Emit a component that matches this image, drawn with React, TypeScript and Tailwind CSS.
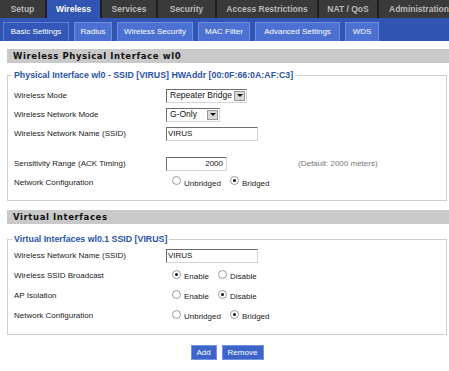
import React from "react";

function Radio({ checked }: { checked?: boolean }) {
  return (
    <span className="inline-flex w-[9px] h-[9px] rounded-full border border-[#9a9a9a] bg-white items-center justify-center relative top-[-2px] shrink-0">
      {checked && <span className="w-[3px] h-[3px] rounded-full bg-[#111]" />}
    </span>
  );
}

function RadioGroup({ items }: { items: { label: string; checked?: boolean }[] }) {
  return (
    <div className="flex items-center pl-[6px] gap-[9px]">
      {items.map((it) => (
        <span key={it.label} className="flex items-center gap-[3px]">
          <Radio checked={it.checked} />
          <span className="relative top-[1px]">{it.label}</span>
        </span>
      ))}
    </div>
  );
}

function Select({ value, width }: { value: string; width: string }) {
  return (
    <div
      className={`${width} h-[14px] flex items-center justify-between border border-t-[#6d6d6d] border-l-[#6d6d6d] border-r-[#d4d4d4] border-b-[#d4d4d4] bg-white`}
    >
      <span className="pl-[3px] text-[8.5px] leading-none text-[#111] whitespace-nowrap">{value}</span>
      <span className="w-[11px] h-[10px] mr-[1px] bg-[#d8d8d8] border border-[#999] flex items-center justify-center shrink-0">
        <span className="w-0 h-0 border-l-[3px] border-r-[3px] border-t-[3px] border-l-transparent border-r-transparent border-t-[#111]" />
      </span>
    </div>
  );
}

function Input({ value, width, right }: { value: string; width: string; right?: boolean }) {
  return (
    <div
      className={`${width} h-[14px] flex items-center border border-t-[#6d6d6d] border-l-[#6d6d6d] border-r-[#d4d4d4] border-b-[#d4d4d4] bg-white ${right ? "justify-end pr-[3px]" : "pl-[1px]"}`}
    >
      <span className="text-[8px] leading-none text-[#111]">{value}</span>
    </div>
  );
}

function Row({ label, children, h = "h-[19px]" }: { label: string; children?: React.ReactNode; h?: string }) {
  return (
    <div className={`flex items-center ${h}`}>
      <div className="w-[158px] pl-[6px] shrink-0">{label}</div>
      <div className="flex items-center">{children}</div>
    </div>
  );
}

function Header({ title }: { title: string }) {
  return (
    <div className="h-[14px] bg-[#c9c9c9] flex items-center pl-[6px] font-['DejaVu_Sans',sans-serif] font-bold text-[8.5px] tracking-[0.6px] text-[#111]">
      {title}
    </div>
  );
}

const topTabs = [
  { label: "Setup", w: "w-[45px]" },
  { label: "Wireless", w: "w-[53px]", active: true },
  { label: "Services", w: "w-[54px]" },
  { label: "Security", w: "w-[57px]" },
  { label: "Access Restrictions", w: "w-[100px]" },
  { label: "NAT / QoS", w: "w-[58px]" },
  { label: "Administration", w: "w-[80px]" },
];

const subTabs = [
  { label: "Basic Settings", w: "w-[66px]", active: true },
  { label: "Radius", w: "w-[38px]" },
  { label: "Wireless Security", w: "w-[76px]" },
  { label: "MAC Filter", w: "w-[52px]" },
  { label: "Advanced Settings", w: "w-[85px]" },
  { label: "WDS", w: "w-[34px]" },
];

export default function App() {
  return (
    <div className="w-[449px] h-[371px] overflow-hidden bg-white font-['Liberation_Sans',Arial,sans-serif] text-[8px] text-[#222]">
      {/* top tabs */}
      <div className="h-[18px] bg-[#1f1f1f] flex gap-[2px] overflow-hidden">
        {topTabs.map((t) => (
          <div
            key={t.label}
            className={`${t.w} shrink-0 h-full flex items-center justify-center font-bold text-[8.5px] whitespace-nowrap ${
              t.active ? "bg-[#3055b2] text-white" : "bg-[#3a3a3a] text-[#b9b9b9]"
            }`}
          >
            {t.label}
          </div>
        ))}
      </div>
      {/* sub tabs */}
      <div className="h-[23px] bg-[#3055b2] flex items-end pl-[3px] gap-[5px]">
        {subTabs.map((t) => (
          <div
            key={t.label}
            className={`${t.w} h-[19px] shrink-0 flex items-center justify-center text-white text-[8px] whitespace-nowrap border border-b-0 ${
              t.active ? "bg-[#3458b8] border-[#5e80d8]" : "bg-[#4c71d2] border-[#6c8fe2]"
            }`}
          >
            {t.label}
          </div>
        ))}
      </div>

      <div className="pl-[7px]">
        <div className="mt-[8px]">
          <Header title="Wireless Physical Interface wl0" />
        </div>
        <fieldset className="mt-[7px] mr-[2px] border border-[#cfcfcf] pb-[8px]">
          <legend className="ml-[4px] px-[2px] font-bold text-[8.8px] leading-[10px] text-[#2a54a8]">
            Physical Interface wl0 - SSID [VIRUS] HWAddr [00:0F:66:0A:AF:C3]
          </legend>
          <div className="pt-[6px]">
            <Row label="Wireless Mode">
              <Select value="Repeater Bridge" width="w-[81px]" />
            </Row>
            <Row label="Wireless Network Mode">
              <Select value="G-Only" width="w-[54px]" />
            </Row>
            <Row label="Wireless Network Name (SSID)">
              <Input value="VIRUS" width="w-[92px]" />
            </Row>
            <div className="h-[11px]" />
            <Row label="Sensitivity Range (ACK Timing)">
              <Input value="2000" width="w-[61px]" right />
              <span className="ml-[71px] text-[#777]">(Default: 2000 meters)</span>
            </Row>
            <Row label="Network Configuration">
              <RadioGroup items={[{ label: "Unbridged" }, { label: "Bridged", checked: true }]} />
            </Row>
          </div>
        </fieldset>

        <div className="mt-[9px]">
          <Header title="Virtual Interfaces" />
        </div>
        <fieldset className="mt-[10px] mr-[2px] border border-[#cfcfcf] pb-[8px]">
          <legend className="ml-[4px] px-[2px] font-bold text-[8.8px] leading-[10px] text-[#2a54a8]">
            Virtual Interfaces wl0.1 SSID [VIRUS]
          </legend>
          <div className="pt-[2px]">
            <Row label="Wireless Network Name (SSID)" h="h-[20px]">
              <Input value="VIRUS" width="w-[92px]" />
            </Row>
            <Row label="Wireless SSID Broadcast" h="h-[20px]">
              <RadioGroup items={[{ label: "Enable", checked: true }, { label: "Disable" }]} />
            </Row>
            <Row label="AP Isolation" h="h-[20px]">
              <RadioGroup items={[{ label: "Enable" }, { label: "Disable", checked: true }]} />
            </Row>
            <Row label="Network Configuration" h="h-[20px]">
              <RadioGroup items={[{ label: "Unbridged" }, { label: "Bridged", checked: true }]} />
            </Row>
          </div>
        </fieldset>

        <div className="mt-[10px] flex justify-center gap-[5px] pr-[2px]">
          <button className="w-[26px] h-[15px] bg-[#3d64c9] border border-[#7393e0] text-white text-[8px] leading-none flex items-center justify-center">
            Add
          </button>
          <button className="w-[42px] h-[15px] bg-[#3d64c9] border border-[#7393e0] text-white text-[8px] leading-none flex items-center justify-center">
            Remove
          </button>
        </div>
      </div>
    </div>
  );
}
